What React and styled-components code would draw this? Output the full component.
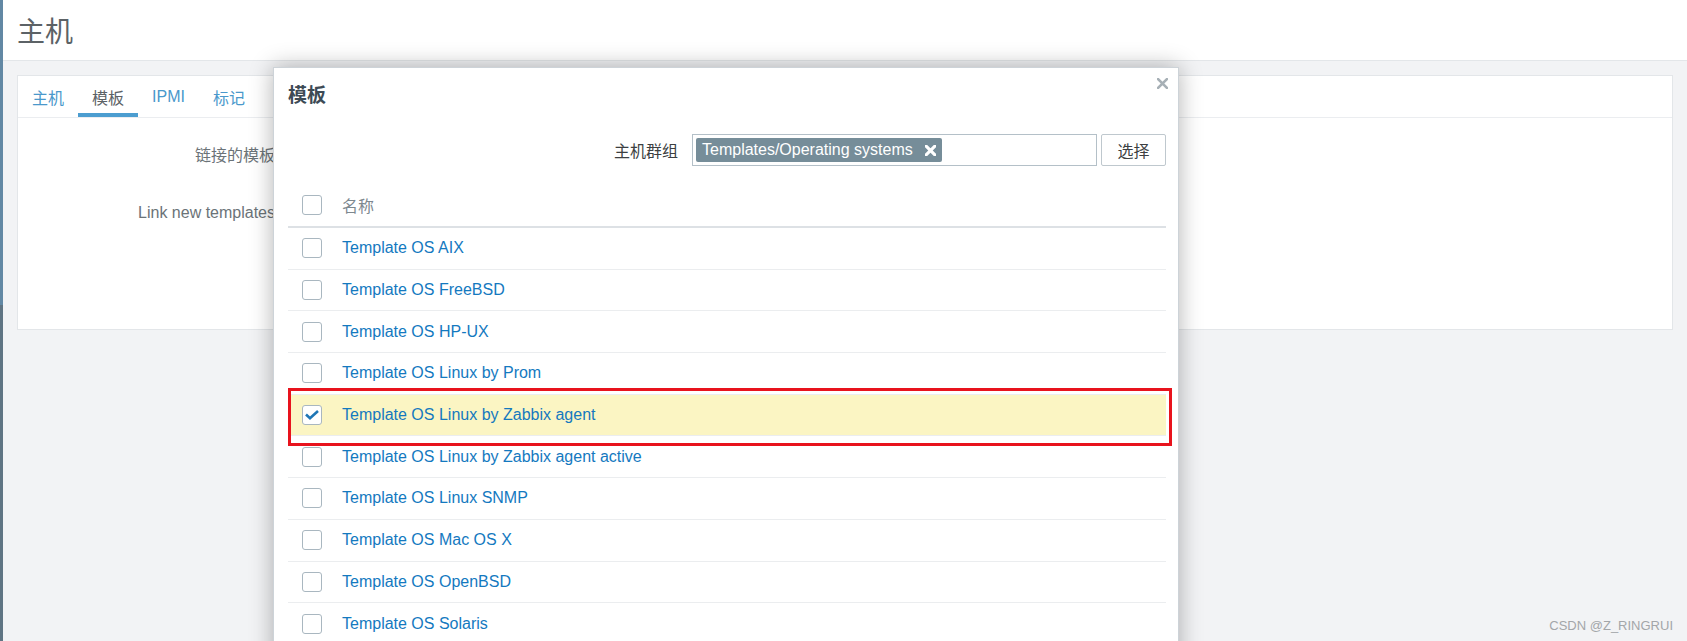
import React from 'react'
import styled, { createGlobalStyle } from 'styled-components'

const GlobalStyle = createGlobalStyle`
  * { box-sizing: border-box; }
  html, body { margin: 0; padding: 0; }
  body {
    background: #f2f3f5;
    font-family: "Liberation Sans", Arial, "Noto Sans CJK SC", sans-serif;
    overflow: hidden;
  }
`

const Page = styled.div`
  position: relative;
  display: flex;
  width: 100%;
  height: 641px;
  overflow: hidden;
`

const Strip = styled.div`
  width: 3px;
  flex: none;
  display: flex;
  flex-direction: column;
`

const StripPart = styled.div`
  height: ${p => p.h || 'auto'};
  flex: ${p => (p.h ? 'none' : 1)};
  background: ${p => p.bg};
`

const Main = styled.div`
  flex: 1;
  display: flex;
  flex-direction: column;
`

const Header = styled.header`
  height: 61px;
  background: #fff;
  border-bottom: 1px solid #e3e6e9;
  display: flex;
  align-items: center;
  padding-left: 14px;
`

const Title = styled.h1`
  margin: 0;
  font-size: 28px;
  font-weight: normal;
  color: #5c6266;
`

const Content = styled.div`
  padding: 14px 14px 0 14px;
`

const Card = styled.div`
  height: 255px;
  background: #fff;
  border: 1px solid #e3e6e9;
`

const Tabs = styled.div`
  display: flex;
  height: 42px;
  border-bottom: 1px solid #ebedf0;
`

const Tab = styled.div`
  height: 41px;
  padding: 0 14px;
  display: flex;
  align-items: center;
  font-size: 16px;
  color: ${p => (p.active ? '#5c6266' : '#4a98cb')};
  box-shadow: ${p => (p.active ? 'inset 0 -4px 0 #4c9dd0' : 'none')};
`

const Form = styled.div`
  padding-top: 26px;
`

const FormRow = styled.div`
  display: flex;
  height: ${p => p.h}px;
`

const Label = styled.div`
  width: 257px;
  height: 24px;
  line-height: 24px;
  text-align: right;
  font-size: 16px;
  color: #6b7378;
`

const Modal = styled.div`
  position: absolute;
  left: 273px;
  top: 67px;
  width: 906px;
  height: 640px;
  background: #fff;
  border: 1px solid #cdd3d8;
  box-shadow: 0 0 22px rgba(0, 0, 0, 0.3);
  padding: 14px 12px 0 14px;
`

const ModalTitle = styled.h4`
  margin: 0;
  height: 27px;
  line-height: 27px;
  font-size: 19px;
  font-weight: bold;
  color: #3d4b55;
`

const CloseBtn = styled.button`
  position: absolute;
  top: 10px;
  right: 10px;
  width: 11px;
  height: 11px;
  padding: 0;
  border: 0;
  background: none;
  display: flex;
  align-items: center;
  justify-content: center;
`

const FilterRow = styled.div`
  margin-top: 25px;
  display: flex;
  align-items: center;
  justify-content: flex-end;
  gap: 4px;
`

const FilterLabel = styled.span`
  font-size: 16px;
  color: #3c3f42;
  margin-right: 10px;
`

const MultiSelect = styled.div`
  width: 405px;
  height: 32px;
  border: 1px solid #b4c0c8;
  padding: 3px;
  display: flex;
  align-items: center;
`

const Tag = styled.span`
  height: 24px;
  display: inline-flex;
  align-items: center;
  gap: 12px;
  padding: 0 6px;
  border-radius: 2px;
  background: #768d99;
  color: #fff;
  font-size: 16px;
`

const Button = styled.button`
  width: 65px;
  height: 32px;
  border: 1px solid #bfc8ce;
  border-radius: 2px;
  background: #fff;
  color: #3c3f42;
  font-size: 16px;
  font-family: inherit;
`

const Table = styled.div`
  margin-top: 17px;
`

const HeadRow = styled.div`
  display: flex;
  align-items: center;
  height: 45px;
  border-bottom: 2px solid #dde1e5;
`

const Row = styled.div`
  position: relative;
  display: flex;
  align-items: center;
  height: 41.7px;
  border-bottom: 1px solid #ebedef;
  background: ${p => (p.selected ? '#fbf5c3' : '#fff')};
`

const CheckCell = styled.div`
  width: 54px;
  flex: none;
  padding-left: 14px;
  display: flex;
`

const Box = styled.span`
  width: 20px;
  height: 20px;
  border: 1px solid #a9b7c0;
  border-radius: 3px;
  background: #fff;
  display: flex;
  align-items: center;
  justify-content: center;
`

const HeadText = styled.span`
  font-size: 16px;
  color: #7d888f;
`

const Link = styled.a`
  font-size: 16px;
  color: #1479bf;
  text-decoration: none;
`

const Callout = styled.div`
  position: absolute;
  z-index: 2;
  left: 0;
  right: -6px;
  top: -7px;
  bottom: -10.5px;
  border: 3px solid #e8131d;
  pointer-events: none;
`

const Watermark = styled.div`
  position: absolute;
  right: 14px;
  bottom: 8px;
  font-size: 13px;
  color: #a3a6a9;
`

const templates = [
  'Template OS AIX',
  'Template OS FreeBSD',
  'Template OS HP-UX',
  'Template OS Linux by Prom',
  'Template OS Linux by Zabbix agent',
  'Template OS Linux by Zabbix agent active',
  'Template OS Linux SNMP',
  'Template OS Mac OS X',
  'Template OS OpenBSD',
  'Template OS Solaris',
]

const Check = ({ checked }) => (
  <Box>
    {checked && (
      <svg width="16" height="12" viewBox="0 0 16 12">
        <path d="M2 5.5 L6 9.2 L14 2" fill="none" stroke="#1f76b5" strokeWidth="2.6" />
      </svg>
    )}
  </Box>
)

const Cross = ({ size, color, width }) => (
  <svg width={size} height={size} viewBox="0 0 10 10">
    <path d="M1 1 L9 9 M9 1 L1 9" stroke={color} strokeWidth={width} strokeLinecap="round" />
  </svg>
)

const App = () => {
  const tabs = ['主机', '模板', 'IPMI', '标记', '宏']

  return (
    <Page>
      <GlobalStyle />
      <Strip>
        <StripPart h="305px" bg="#6288a4" />
        <StripPart bg="#5f7483" />
      </Strip>
      <Main>
        <Header>
          <Title>主机</Title>
        </Header>
        <Content>
          <Card>
            <Tabs>
              {tabs.map(t => (
                <Tab key={t} active={t === '模板'}>{t}</Tab>
              ))}
            </Tabs>
            <Form>
              <FormRow h={57}>
                <Label>链接的模板</Label>
              </FormRow>
              <FormRow h={40}>
                <Label>Link new templates</Label>
              </FormRow>
            </Form>
          </Card>
        </Content>
      </Main>

      <Modal>
        <ModalTitle>模板</ModalTitle>
        <CloseBtn>
          <Cross size={11} color="#a7b0b6" width={2.4} />
        </CloseBtn>
        <FilterRow>
          <FilterLabel>主机群组</FilterLabel>
          <MultiSelect>
            <Tag>
              Templates/Operating systems
              <Cross size={11} color="#fff" width={2.8} />
            </Tag>
          </MultiSelect>
          <Button>选择</Button>
        </FilterRow>
        <Table>
          <HeadRow>
            <CheckCell><Check /></CheckCell>
            <HeadText>名称</HeadText>
          </HeadRow>
          {templates.map((name, i) => (
            <Row key={name} selected={i === 4}>
              <CheckCell><Check checked={i === 4} /></CheckCell>
              <Link href="#">{name}</Link>
              {i === 4 && <Callout />}
            </Row>
          ))}
        </Table>
      </Modal>

      <Watermark>CSDN @Z_RINGRUI</Watermark>
    </Page>
  )
}

export default App
